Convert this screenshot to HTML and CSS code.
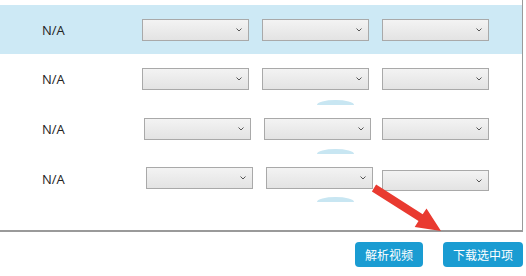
FILE: index.html
```html
<!DOCTYPE html>
<html lang="zh-CN">
<head>
  <meta charset="UTF-8" />
  <title>解析视频</title>
  <link rel="stylesheet" href="styles.css">
</head>
<body>
  <div class="panel">
    <div class="row active">
      <div class="label">N/A</div>
      <div class="selects">
        <div class="select"><svg viewBox="0 0 6 4"><path d="M0.5 0.5 L3 3 L5.5 0.5"/></svg></div>
        <div class="select"><svg viewBox="0 0 6 4"><path d="M0.5 0.5 L3 3 L5.5 0.5"/></svg></div>
        <div class="select"><svg viewBox="0 0 6 4"><path d="M0.5 0.5 L3 3 L5.5 0.5"/></svg></div>
      </div>
    </div>
    <div class="row">
      <div class="label">N/A</div>
      <div class="selects">
        <div class="select"><svg viewBox="0 0 6 4"><path d="M0.5 0.5 L3 3 L5.5 0.5"/></svg></div>
        <div class="select"><svg viewBox="0 0 6 4"><path d="M0.5 0.5 L3 3 L5.5 0.5"/></svg></div>
        <div class="select"><svg viewBox="0 0 6 4"><path d="M0.5 0.5 L3 3 L5.5 0.5"/></svg></div>
      </div>
    </div>
    <div class="row shift-2">
      <div class="label">N/A</div>
      <div class="selects">
        <div class="select"><svg viewBox="0 0 6 4"><path d="M0.5 0.5 L3 3 L5.5 0.5"/></svg></div>
        <div class="select"><svg viewBox="0 0 6 4"><path d="M0.5 0.5 L3 3 L5.5 0.5"/></svg></div>
        <div class="select"><svg viewBox="0 0 6 4"><path d="M0.5 0.5 L3 3 L5.5 0.5"/></svg></div>
      </div>
    </div>
    <div class="row shift-4">
      <div class="label">N/A</div>
      <div class="selects">
        <div class="select"><svg viewBox="0 0 6 4"><path d="M0.5 0.5 L3 3 L5.5 0.5"/></svg></div>
        <div class="select"><svg viewBox="0 0 6 4"><path d="M0.5 0.5 L3 3 L5.5 0.5"/></svg></div>
        <div class="select low"><svg viewBox="0 0 6 4"><path d="M0.5 0.5 L3 3 L5.5 0.5"/></svg></div>
      </div>
    </div>

    <span class="dome d1"></span>
    <span class="dome d2"></span>
    <span class="dome d3"></span>
  </div>

  <div class="actions">
    <button class="btn">解析视频</button>
    <button class="btn">下载选中项</button>
  </div>

  <svg class="arrow" width="526" height="276" viewBox="0 0 526 276">
    <polygon points="371.9,191.4 376.1,184.6 422.7,214.3 426.5,208.4 441,231 414.7,227 418.5,221.1" />
  </svg>
</body>
</html>
```

FILE: styles.css
```css
* { box-sizing: border-box; margin: 0; padding: 0; }
body {
  font-family: 'Open Sans', 'Noto Sans CJK SC', sans-serif;
  background: #fff;
  color: #222;
  position: relative;
  width: 526px;
  height: 276px;
  overflow: hidden;
}
.panel {
  position: relative;
  width: 523px;
  height: 232px;
  padding-top: 5px;
  border-right: 1px solid #9a9a9a;
  border-bottom: 2px solid #9a9a9a;
}
.row {
  display: flex;
  align-items: center;
  height: 50px;
}
.row.active {
  background: #cde9f5;
  height: 49px;
}
.label {
  width: 142px;
  padding-left: 42px;
  font-size: 13px;
}
.selects {
  display: flex;
  gap: 13px;
}
.select {
  position: relative;
  width: 107px;
  height: 22px;
  border: 1px solid #a9a9a9;
  background: linear-gradient(#f3f3f3, #e3e3e3);
}
.select svg {
  position: absolute;
  right: 6px;
  top: 8px;
  width: 6px;
  height: 4px;
  fill: none;
  stroke: #555;
  stroke-width: 1;
}
.shift-2 .selects { margin-left: 2px; }
.shift-2 .select:last-child { margin-left: -2px; }
.shift-4 .selects { margin-left: 4px; }
.shift-4 .select:last-child { margin-left: -4px; }
.select.low { margin-top: 3px; height: 21px; }
.dome {
  position: absolute;
  left: 317px;
  width: 37px;
  height: 5px;
  border-radius: 50% 50% 0 0 / 100% 100% 0 0;
  background: #c8e6f2;
}
.d1 { top: 100px; }
.d2 { top: 149px; }
.d3 { top: 197px; }
.actions {
  display: flex;
  justify-content: flex-end;
  gap: 20px;
  padding-top: 10px;
  padding-right: 3px;
}
.btn {
  height: 25px;
  border: none;
  border-radius: 4px;
  background: #1a9cd2;
  color: #fff;
  font-family: 'Noto Sans CJK SC', sans-serif;
  font-size: 12px;
  padding: 0 10px;
}
.btn:first-child { width: 68px; }
.btn:last-child { width: 80px; }
.arrow {
  position: absolute;
  left: 0;
  top: 0;
  fill: #e93a30;
}
```
